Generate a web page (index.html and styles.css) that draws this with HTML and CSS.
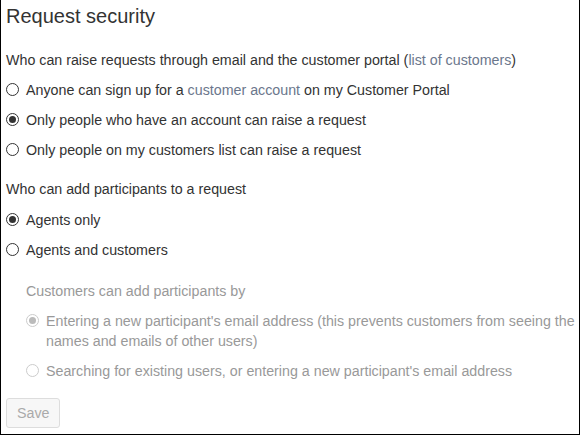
FILE: index.html
```html
<!DOCTYPE html>
<html>
<head>
<meta charset="utf-8">
<link rel="stylesheet" href="styles.css">
</head>
<body>
<div class="frame">
  <h1 class="title">Request security</h1>
  <div class="group">
    <p class="label">Who can raise requests through email and the customer portal (<a class="link">list of customers</a>)</p>
    <label class="opt"><span class="radio"></span><span>Anyone can sign up for a <a class="link">customer account</a> on my Customer Portal</span></label>
    <label class="opt"><span class="radio on"></span><span>Only people who have an account can raise a request</span></label>
    <label class="opt"><span class="radio"></span><span>Only people on my customers list can raise a request</span></label>
  </div>
  <div class="group">
    <p class="label">Who can add participants to a request</p>
    <label class="opt"><span class="radio on"></span><span>Agents only</span></label>
    <label class="opt"><span class="radio"></span><span>Agents and customers</span></label>
  </div>
  <div class="group sub">
    <p class="label">Customers can add participants by</p>
    <label class="opt wrap"><span class="radio on"></span><span>Entering a new participant's email address (this prevents customers from seeing the names and emails of other users)</span></label>
    <label class="opt"><span class="radio"></span><span>Searching for existing users, or entering a new participant's email address</span></label>
  </div>
  <button class="save">Save</button>
</div>
</body>
</html>
```
FILE: styles.css
```css
html, body { margin: 0; padding: 0; background: #fff; }
body { font-family: "Liberation Sans", Arial, sans-serif; color: #333; font-size: 14.25px; }
.frame {
  width: 580px; height: 435px; box-sizing: border-box;
  border: 1px solid #000; border-top: none;
  padding: 4px 0 0 5px;
  overflow: hidden;
}
.title { font-size: 20px; font-weight: normal; margin: 0; line-height: 24px; color: #333; }
.group { display: flex; flex-direction: column; }
.label { margin: 0; line-height: 20px; }
.group:first-of-type .label { margin-top: 22px; }
.group + .group .label { margin-top: 19px; }
.group.sub .label { margin-top: 21px; }
.opt { display: flex; align-items: flex-start; gap: 7px; margin-top: 10px; line-height: 20px; }
.group:nth-of-type(2) .opt { margin-top: 11px; }
.group:nth-of-type(2) .opt + .opt { margin-top: 10px; }
.link { color: #6b778c; text-decoration: none; }
.radio {
  flex: none; width: 11px; height: 11px; border: 1px solid #333; border-radius: 50%;
  margin-top: 3px; box-sizing: content-box; display: flex; align-items: center; justify-content: center;
  background: #fff;
}
.radio.on::after { content: ""; width: 7px; height: 7px; border-radius: 50%; background: #333; }
.sub { padding-left: 20px; color: #999; }
.sub .radio { border-color: #ccc; }
.sub .radio.on::after { background: #bbb; }
.save {
  margin-top: 17px; font: inherit; font-size: 14.25px; color: #aaa; background: #f7f7f7;
  border: 1px solid #ddd; border-radius: 3px; padding: 5px 10px; line-height: 18px;
}
```
